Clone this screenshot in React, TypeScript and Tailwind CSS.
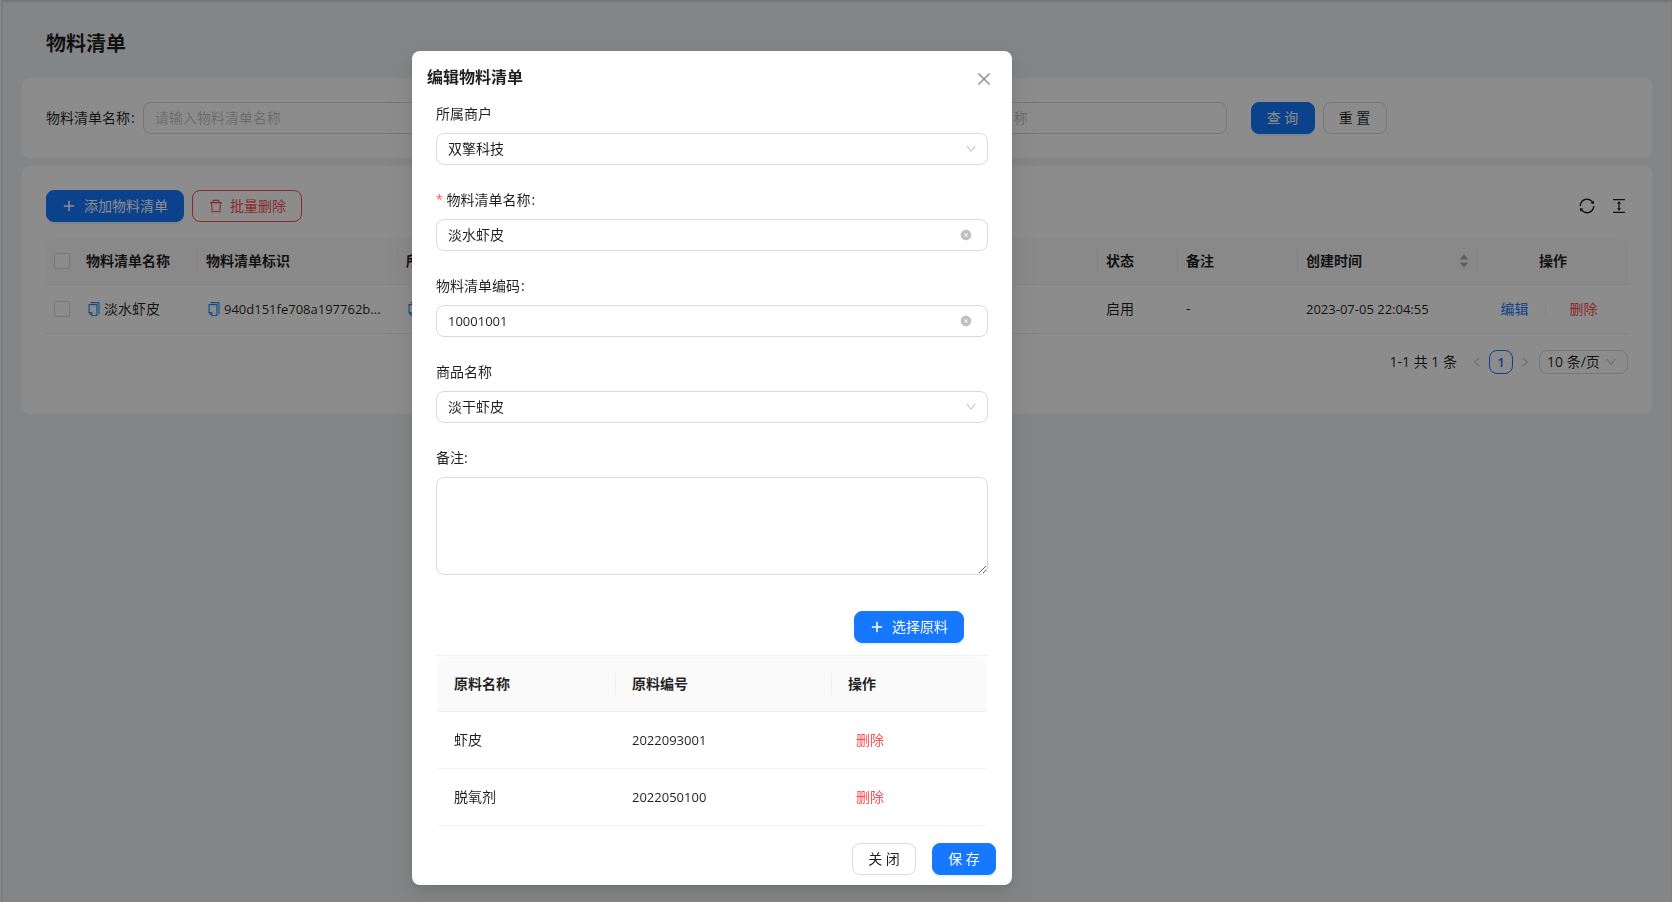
import React, { useState } from "react";
import {
  AiFillCaretDown,
  AiFillCaretUp,
  AiFillCloseCircle,
  AiOutlineClose,
  AiOutlineColumnHeight,
  AiOutlineCopy,
  AiOutlineDelete,
  AiOutlineDown,
  AiOutlineLeft,
  AiOutlinePlus,
  AiOutlineRight,
  AiOutlineSync,
} from "react-icons/ai";
import clsx from "clsx";

interface Bom {
  id: string;
  name: string;
  code: string;
  merchant: string;
  product: string;
  status: string;
  remark: string;
  createdAt: string;
}

interface Material {
  name: string;
  code: string;
}

const boms: Bom[] = [
  {
    id: "1",
    name: "淡水虾皮",
    code: "940d151fe708a197762b...",
    merchant: "双擎科技",
    product: "淡干虾皮",
    status: "启用",
    remark: "-",
    createdAt: "2023-07-05 22:04:55",
  },
];

const initialMaterials: Material[] = [
  { name: "虾皮", code: "2022093001" },
  { name: "脱氧剂", code: "2022050100" },
];

const searchFields = [
  { id: "q-name", label: "物料清单名称", placeholder: "请输入物料清单名称" },
  {
    id: "q-product",
    label: "商品名称",
    placeholder: "请输入商品名称",
    className: "col-start-3",
  },
];

type ButtonProps = React.ButtonHTMLAttributes<HTMLButtonElement> & {
  kind?: "primary" | "default" | "danger";
};

const Button: React.FC<ButtonProps> = ({
  kind = "default",
  className,
  ...rest
}) => (
  <button
    type="button"
    className={clsx(
      "flex h-8 min-w-16 items-center justify-center rounded-lg border px-[15px] whitespace-nowrap",
      kind === "primary" &&
        "border-[#1677ff] bg-[#1677ff] text-white shadow-[0_2px_0_rgba(5,145,255,0.1)]",
      kind === "default" && "border-[#d9d9d9] bg-white",
      kind === "danger" && "border-[#ff4d4f] bg-white text-[#ff4d4f]",
      className
    )}
    {...rest}
  />
);

// Header cell with the short divider on its right side
const Th: React.FC<{
  children: React.ReactNode;
  last?: boolean;
  className?: string;
}> = ({ children, last, className }) => (
  <th
    className={clsx(
      "relative border-b border-[#f0f0f0] bg-[#fafafa] font-semibold",
      !last &&
        "after:absolute after:top-1/2 after:right-0 after:h-[22px] after:w-px after:-translate-y-1/2 after:bg-[#f0f0f0]",
      className
    )}
  >
    {children}
  </th>
);

const Checkbox: React.FC<{ label: string }> = ({ label }) => (
  <input
    type="checkbox"
    aria-label={label}
    className="block h-4 w-4 appearance-none rounded-xs border border-[#d9d9d9] bg-white checked:bg-[#1677ff]"
  />
);

const CopyIcon = () => (
  <button type="button" aria-label="复制" className="text-[#1890ff]">
    <AiOutlineCopy size={16} />
  </button>
);

const SearchForm = () => (
  <form className="grid grid-cols-4 gap-6 rounded-lg bg-white p-6">
    {searchFields.map((field) => (
      <div
        key={field.id}
        className={clsx("flex items-center gap-2", field.className)}
      >
        <label htmlFor={field.id} className="whitespace-nowrap">
          {field.label}
          <span className="ml-px">:</span>
        </label>
        <input
          id={field.id}
          placeholder={field.placeholder}
          className="h-8 w-full min-w-0 rounded-lg border border-[#d9d9d9] px-[11px] pb-0.5 placeholder:text-black/25"
        />
      </div>
    ))}
    <div className="flex gap-2">
      <Button kind="primary">查 询</Button>
      <Button>重 置</Button>
    </div>
  </form>
);

const BomTable = () => (
  <table className="w-full table-fixed border-separate border-spacing-0">
    <colgroup>
      <col className="w-8" />
      <col className="w-[120px]" />
      <col className="w-[200px]" />
      <col />
      <col />
      <col className="w-20" />
      <col className="w-[120px]" />
      <col className="w-[180px]" />
      <col className="w-[150px]" />
    </colgroup>
    <thead>
      <tr className="h-[47px] text-left">
        <Th last className="rounded-tl-lg px-2">
          <Checkbox label="全选" />
        </Th>
        <Th className="px-2">物料清单名称</Th>
        <Th className="px-2">物料清单标识</Th>
        <Th className="px-2">所属商户</Th>
        <Th className="px-2">商品名称</Th>
        <Th className="px-2">状态</Th>
        <Th className="px-2">备注</Th>
        <Th className="px-2">
          <span className="flex items-center justify-between">
            创建时间
            <span className="flex flex-col text-black/30">
              <AiFillCaretUp size={12} className="-mb-1" />
              <AiFillCaretDown size={12} />
            </span>
          </span>
        </Th>
        <Th last className="rounded-tr-lg text-center">
          操作
        </Th>
      </tr>
    </thead>
    <tbody>
      {boms.map((bom) => (
        <tr
          key={bom.id}
          className="h-[49px] *:border-b *:border-[#f0f0f0] *:px-2"
        >
          <td>
            <Checkbox label={bom.name} />
          </td>
          <td>
            <span className="flex items-center gap-0.5">
              <CopyIcon />
              {bom.name}
            </span>
          </td>
          <td>
            <span className="flex items-center gap-0.5 text-[13px] whitespace-nowrap">
              <CopyIcon />
              {bom.code}
            </span>
          </td>
          <td>
            <span className="flex items-center gap-0.5">
              <CopyIcon />
              {bom.merchant}
            </span>
          </td>
          <td>{bom.product}</td>
          <td>{bom.status}</td>
          <td>{bom.remark}</td>
          <td className="text-[13px] whitespace-nowrap">{bom.createdAt}</td>
          <td>
            <span className="flex items-center justify-center">
              <a href="#edit" className="px-2 text-[#1677ff]">
                编辑
              </a>
              <span className="mx-2 h-3 w-px bg-black/6" />
              <a href="#delete" className="px-4 text-[#ff4d4f]">
                删除
              </a>
            </span>
          </td>
        </tr>
      ))}
    </tbody>
  </table>
);

const Pagination = () => (
  <div className="mt-4 flex h-6 items-center justify-end">
    <span className="mr-2">1-1 共 1 条</span>
    <button
      type="button"
      aria-label="上一页"
      className="flex h-6 w-6 items-center justify-center text-black/25"
    >
      <AiOutlineLeft size={12} />
    </button>
    <button
      type="button"
      className="h-6 w-6 rounded-lg border border-[#1677ff] text-[13px] leading-[22px] font-semibold text-[#1677ff]"
    >
      1
    </button>
    <button
      type="button"
      aria-label="下一页"
      className="flex h-6 w-6 items-center justify-center text-black/25"
    >
      <AiOutlineRight size={12} />
    </button>
    <span className="relative ml-0.5">
      <select
        aria-label="每页条数"
        className="block h-6 w-[89px] appearance-none rounded-lg border border-[#d9d9d9] bg-white px-[7px] leading-[22px]"
      >
        <option>10 条/页</option>
        <option>20 条/页</option>
      </select>
      <AiOutlineDown
        size={12}
        className="pointer-events-none absolute top-1.5 right-[11px] text-black/25"
      />
    </span>
  </div>
);

interface FieldProps {
  id: string;
  label: string;
  required?: boolean;
  colon?: boolean;
  children: React.ReactNode;
}

const Field: React.FC<FieldProps> = ({
  id,
  label,
  required,
  colon,
  children,
}) => (
  <div className="mb-6">
    <label htmlFor={id} className="mb-2 flex">
      {required && <span className="mr-1 text-xs leading-[22px] text-[#ff4d4f]">*</span>}
      {label}
      {colon && <span className="ml-px">:</span>}
    </label>
    {children}
  </div>
);

const SelectInput: React.FC<{ id: string; options: string[] }> = ({
  id,
  options,
}) => (
  <div className="relative">
    <select
      id={id}
      className="block h-8 w-full appearance-none rounded-lg border border-[#d9d9d9] bg-white px-[11px]"
    >
      {options.map((option) => (
        <option key={option}>{option}</option>
      ))}
    </select>
    <AiOutlineDown
      size={12}
      className="pointer-events-none absolute top-2.5 right-[11px] text-black/25"
    />
  </div>
);

const ClearableInput: React.FC<{
  id: string;
  initial: string;
  className?: string;
}> = ({ id, initial, className }) => {
  const [value, setValue] = useState(initial);
  return (
    <div className="relative">
      <input
        id={id}
        value={value}
        onChange={(e) => setValue(e.target.value)}
        className={clsx(
          "block h-8 w-full rounded-lg border border-[#d9d9d9] px-[11px]",
          className
        )}
      />
      <button
        type="button"
        aria-label="清除"
        onClick={() => setValue("")}
        className="absolute top-2.5 right-4 text-black/25"
      >
        <AiFillCloseCircle size={12} />
      </button>
    </div>
  );
};

const MaterialTable = () => {
  const [materials, setMaterials] = useState(initialMaterials);

  const remove = (code: string) =>
    setMaterials(materials.filter((m) => m.code !== code));

  return (
    <div className="border-t border-[#f0f0f0] px-0.5 pt-px">
      <table className="w-full table-fixed border-separate border-spacing-0">
        <colgroup>
          <col className="w-[178px]" />
          <col className="w-[216px]" />
          <col />
        </colgroup>
        <thead>
          <tr className="h-[55px] text-left">
            <Th className="rounded-tl-lg px-4">原料名称</Th>
            <Th className="px-4">原料编号</Th>
            <Th last className="rounded-tr-lg px-4">
              操作
            </Th>
          </tr>
        </thead>
        <tbody>
          {materials.map((m) => (
            <tr
              key={m.code}
              className="h-[57px] *:border-b *:border-[#f0f0f0] *:px-4"
            >
              <td>{m.name}</td>
              <td className="text-[13px]">{m.code}</td>
              <td>
                <button
                  type="button"
                  onClick={() => remove(m.code)}
                  className="px-2 text-[#ff4d4f]"
                >
                  删除
                </button>
              </td>
            </tr>
          ))}
        </tbody>
      </table>
    </div>
  );
};

const EditModal: React.FC<{ onClose: () => void }> = ({ onClose }) => (
  <div className="fixed inset-0 flex items-start justify-center overflow-auto bg-black/45 pt-[51px] pr-[248px]">
    <div
      role="dialog"
      aria-labelledby="modal-title"
      className="w-[600px] rounded-lg bg-white pb-2.5 shadow-[0_6px_16px_0_rgba(0,0,0,0.08),0_3px_6px_-4px_rgba(0,0,0,0.12),0_9px_28px_8px_rgba(0,0,0,0.05)]"
    >
      <div className="flex items-center justify-between py-3.5 pr-[19px] pl-[15px]">
        <h2 id="modal-title" className="text-base font-semibold">
          编辑物料清单
        </h2>
        <button
          type="button"
          aria-label="关闭"
          onClick={onClose}
          className="mt-1 text-black/45"
        >
          <AiOutlineClose size={18} />
        </button>
      </div>

      <div className="px-6">
        <Field id="merchant" label="所属商户">
          <SelectInput id="merchant" options={["双擎科技"]} />
        </Field>
        <Field id="name" label="物料清单名称" required colon>
          <ClearableInput id="name" initial="淡水虾皮" className="pb-0.5" />
        </Field>
        <Field id="code" label="物料清单编码" colon>
          <ClearableInput id="code" initial="10001001" className="text-[13px]" />
        </Field>
        <Field id="product" label="商品名称">
          <SelectInput id="product" options={["淡干虾皮"]} />
        </Field>
        <Field id="remark" label="备注:">
          <textarea
            id="remark"
            className="block h-[98px] w-full rounded-lg border border-[#d9d9d9] px-[11px] py-1"
          />
        </Field>

        <div className="flex justify-end py-3 pr-6">
          <Button kind="primary" className="gap-2">
            <AiOutlinePlus size={14} strokeWidth={40} />
            选择原料
          </Button>
        </div>

        <MaterialTable />
      </div>

      <div className="mt-[17px] flex justify-end gap-4 pr-4">
        <Button onClick={onClose}>关 闭</Button>
        <Button kind="primary">保 存</Button>
      </div>
    </div>
  </div>
);

const App: React.FC = () => {
  const [showModal, setShowModal] = useState(true);

  return (
    <div className="flex min-h-screen bg-white font-['Open_Sans','Noto_Sans_CJK_SC',sans-serif] text-sm leading-[22px] text-black/88">
      <div className="w-0.5 shrink-0 border-r border-[#d9d9d9]" />
      <main className="flex-1 bg-[#f0f2f5] px-5 shadow-[inset_0_2px_2px_rgba(0,0,0,0.12)]">
        <h1 className="px-6 pt-[30px] pb-5 text-xl leading-7 font-semibold">
          物料清单
        </h1>
        <SearchForm />

        <section className="mt-2 rounded-lg bg-white px-6 pt-6 pb-10">
          <div className="mb-4 flex items-center gap-2">
            <Button kind="primary" className="gap-2">
              <AiOutlinePlus size={14} strokeWidth={40} />
              添加物料清单
            </Button>
            <Button kind="danger" className="gap-1.5">
              <AiOutlineDelete size={16} />
              批量删除
            </Button>
            <div className="ml-auto flex gap-3.5">
              <button type="button" aria-label="刷新">
                <AiOutlineSync size={18} />
              </button>
              <button type="button" aria-label="密度">
                <AiOutlineColumnHeight size={18} />
              </button>
            </div>
          </div>
          <BomTable />
          <Pagination />
        </section>
      </main>

      {showModal && <EditModal onClose={() => setShowModal(false)} />}
    </div>
  );
};

export default App;
